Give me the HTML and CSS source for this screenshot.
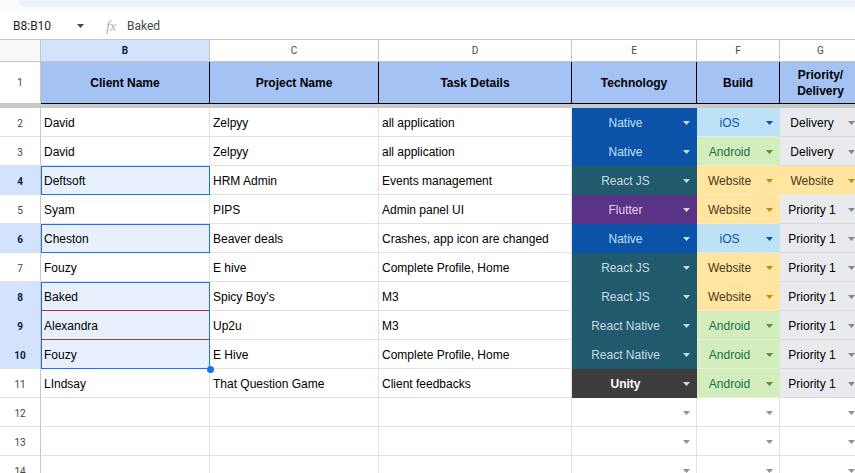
FILE: index.html
```html
<!DOCTYPE html>
<html lang="en">
<head>
<meta charset="utf-8">
<title>Sheet</title>
<link rel="stylesheet" href="styles.css">
</head>
<body>
<div class="topbar"><div class="topbar-pill"></div></div>
<div class="formula">
  <span class="namebox">B8:B10</span>
  <span class="arr name-arr"></span>
  <span class="fx">fx</span>
  <span class="fval">Baked</span>
</div>
<div class="sheet">
  <div class="corner"></div>
  <div class="ch ch-sel">B</div>
  <div class="ch">C</div>
  <div class="ch">D</div>
  <div class="ch">E</div>
  <div class="ch">F</div>
  <div class="ch">G</div>

  <div class="rh rh-head">1</div>
  <div class="hd">Client Name</div>
  <div class="hd">Project Name</div>
  <div class="hd">Task Details</div>
  <div class="hd">Technology</div>
  <div class="hd">Build</div>
  <div class="hd">Priority/<br>Delivery</div>

  <div class="freeze"></div>

  <div class="rh">2</div>
  <div class="c">David</div>
  <div class="c">Zelpyy</div>
  <div class="c">all application</div>
  <div class="c dd native"><span class="t">Native</span><span class="arr"></span></div>
  <div class="c dd ios"><span class="t">iOS</span><span class="arr"></span></div>
  <div class="c dd grey"><span class="t">Delivery</span><span class="arr"></span></div>

  <div class="rh">3</div>
  <div class="c">David</div>
  <div class="c">Zelpyy</div>
  <div class="c">all application</div>
  <div class="c dd native"><span class="t">Native</span><span class="arr"></span></div>
  <div class="c dd android"><span class="t">Android</span><span class="arr"></span></div>
  <div class="c dd grey"><span class="t">Delivery</span><span class="arr"></span></div>

  <div class="rh rh-sel">4</div>
  <div class="c sel">Deftsoft</div>
  <div class="c">HRM Admin</div>
  <div class="c">Events management</div>
  <div class="c dd react"><span class="t">React JS</span><span class="arr"></span></div>
  <div class="c dd web"><span class="t">Website</span><span class="arr"></span></div>
  <div class="c dd web"><span class="t">Website</span><span class="arr"></span></div>

  <div class="rh">5</div>
  <div class="c">Syam</div>
  <div class="c">PIPS</div>
  <div class="c">Admin panel UI</div>
  <div class="c dd flutter"><span class="t">Flutter</span><span class="arr"></span></div>
  <div class="c dd web"><span class="t">Website</span><span class="arr"></span></div>
  <div class="c dd grey"><span class="t">Priority 1</span><span class="arr"></span></div>

  <div class="rh rh-sel">6</div>
  <div class="c sel">Cheston</div>
  <div class="c">Beaver deals</div>
  <div class="c">Crashes, app icon are changed</div>
  <div class="c dd native"><span class="t">Native</span><span class="arr"></span></div>
  <div class="c dd ios"><span class="t">iOS</span><span class="arr"></span></div>
  <div class="c dd grey"><span class="t">Priority 1</span><span class="arr"></span></div>

  <div class="rh">7</div>
  <div class="c">Fouzy</div>
  <div class="c">E hive</div>
  <div class="c">Complete Profile, Home</div>
  <div class="c dd react"><span class="t">React JS</span><span class="arr"></span></div>
  <div class="c dd web"><span class="t">Website</span><span class="arr"></span></div>
  <div class="c dd grey"><span class="t">Priority 1</span><span class="arr"></span></div>

  <div class="rh rh-sel">8</div>
  <div class="c rng rng-top">Baked</div>
  <div class="c">Spicy Boy's</div>
  <div class="c">M3</div>
  <div class="c dd react"><span class="t">React JS</span><span class="arr"></span></div>
  <div class="c dd web"><span class="t">Website</span><span class="arr"></span></div>
  <div class="c dd grey"><span class="t">Priority 1</span><span class="arr"></span></div>

  <div class="rh rh-sel">9</div>
  <div class="c rng">Alexandra</div>
  <div class="c">Up2u</div>
  <div class="c">M3</div>
  <div class="c dd react"><span class="t">React Native</span><span class="arr"></span></div>
  <div class="c dd android"><span class="t">Android</span><span class="arr"></span></div>
  <div class="c dd grey"><span class="t">Priority 1</span><span class="arr"></span></div>

  <div class="rh rh-sel">10</div>
  <div class="c rng rng-bottom">Fouzy<span class="handle"></span></div>
  <div class="c">E Hive</div>
  <div class="c">Complete Profile, Home</div>
  <div class="c dd react"><span class="t">React Native</span><span class="arr"></span></div>
  <div class="c dd android"><span class="t">Android</span><span class="arr"></span></div>
  <div class="c dd grey"><span class="t">Priority 1</span><span class="arr"></span></div>

  <div class="rh">11</div>
  <div class="c">LIndsay</div>
  <div class="c">That Question Game</div>
  <div class="c">Client feedbacks</div>
  <div class="c dd unity"><span class="t">Unity</span><span class="arr"></span></div>
  <div class="c dd android"><span class="t">Android</span><span class="arr"></span></div>
  <div class="c dd grey"><span class="t">Priority 1</span><span class="arr"></span></div>

  <div class="rh">12</div>
  <div class="c"></div>
  <div class="c"></div>
  <div class="c"></div>
  <div class="c dd empty"><span class="t"></span><span class="arr"></span></div>
  <div class="c dd empty"><span class="t"></span><span class="arr"></span></div>
  <div class="c dd empty"><span class="t"></span><span class="arr"></span></div>

  <div class="rh">13</div>
  <div class="c"></div>
  <div class="c"></div>
  <div class="c"></div>
  <div class="c dd empty"><span class="t"></span><span class="arr"></span></div>
  <div class="c dd empty"><span class="t"></span><span class="arr"></span></div>
  <div class="c dd empty"><span class="t"></span><span class="arr"></span></div>

  <div class="rh">14</div>
  <div class="c"></div>
  <div class="c"></div>
  <div class="c"></div>
  <div class="c dd empty"><span class="t"></span><span class="arr"></span></div>
  <div class="c dd empty"><span class="t"></span><span class="arr"></span></div>
  <div class="c dd empty"><span class="t"></span><span class="arr"></span></div>
</div>
</body>
</html>
```
FILE: styles.css
```css
* { box-sizing: border-box; }
html, body { margin: 0; padding: 0; }
body {
  width: 855px;
  height: 473px;
  overflow: hidden;
  background: #ffffff;
  font-family: "Liberation Sans", Arial, sans-serif;
  color: #000;
}

.topbar {
  height: 13px;
  background: #f9fbfd;
  padding-left: 19px;
}
.topbar-pill {
  height: 7px;
  background: #edf2fa;
  border-bottom-left-radius: 8px;
}

.formula {
  height: 26px;
  display: flex;
  align-items: center;
  font-family: Roboto, "Liberation Sans", sans-serif;
  font-size: 12px;
  color: #1f1f1f;
}
.namebox {
  width: 64px;
  margin-left: 13px;
}
.name-arr {
  background: #444746;
  margin-right: 22px;
}
.fx {
  font-family: "Liberation Serif", serif;
  font-style: italic;
  font-size: 15px;
  color: #b4b4b4;
  width: 21px;
  line-height: 1;
  letter-spacing: -0.5px;
}
.fval {
  color: #444746;
}

.arr {
  display: block;
  flex: none;
  width: 7px;
  height: 4px;
  clip-path: polygon(0 0, 100% 0, 50% 100%);
}

.sheet {
  display: grid;
  grid-template-columns: 41px 169px 169px 193px 125px 83px 82px;
  grid-template-rows: 22px 42px 4px repeat(13, 29px);
  border-top: 1px solid #c4c7c5;
  width: 862px;
}

.corner {
  background: #f8f9fa;
  border-right: 1px solid #c4c7c5;
  border-bottom: 1px solid #c4c7c5;
}
.ch {
  display: flex;
  align-items: center;
  justify-content: center;
  font-family: Roboto, "Liberation Sans", sans-serif;
  font-size: 10px;
  color: #444746;
  border-right: 1px solid #c4c7c5;
  border-bottom: 1px solid #c4c7c5;
  background: #fff;
}
.ch-sel {
  background: #d3e3fd;
  color: #041e49;
  font-weight: bold;
}

.rh {
  display: flex;
  align-items: center;
  justify-content: center;
  padding-top: 2px;
  font-family: Roboto, "Liberation Sans", sans-serif;
  font-size: 10px;
  color: #444746;
  background: #fff;
  border-right: 1px solid #c4c7c5;
  border-bottom: 1px solid #e1e1e1;
}
.rh-head { border-bottom-color: #c4c7c5; padding-top: 0; }
.rh-sel {
  background: #d3e3fd;
  color: #041e49;
  font-weight: bold;
}

.hd {
  display: flex;
  align-items: center;
  justify-content: center;
  text-align: center;
  background: #a4c2f4;
  font-weight: bold;
  font-size: 12px;
  line-height: 16px;
  color: #000;
  border-right: 1px solid #000;
  border-bottom: 1px solid #000;
}

.freeze {
  grid-column: 1 / -1;
  background: #c9c9c9;
}

.c {
  display: flex;
  align-items: center;
  padding-left: 3px;
  padding-top: 2px;
  font-size: 12px;
  white-space: nowrap;
  overflow: hidden;
  border-right: 1px solid #e1e1e1;
  border-bottom: 1px solid #e1e1e1;
}

.sel {
  background: #e8f0fe;
  border-right-color: #1a73e8;
  border-bottom-color: #1a73e8;
  box-shadow: inset 1px 1px 0 #1a73e8;
}

.rng {
  background: #e8f0fe;
  border-right-color: #1a73e8;
  border-bottom-color: #a33a3a;
  box-shadow: inset 1px 0 0 #1a73e8;
}
.rng-top {
  box-shadow: inset 1px 1px 0 #1a73e8;
}
.rng-bottom {
  border-bottom-color: #1a73e8;
  position: relative;
  overflow: visible;
}
.handle {
  position: absolute;
  right: -5px;
  bottom: -5px;
  width: 7px;
  height: 7px;
  border-radius: 50%;
  background: #1a73e8;
  z-index: 3;
}

.dd {
  padding-left: 0;
}
.dd .t {
  flex: 1;
  text-align: center;
  margin-right: 4px;
}
.dd .arr {
  margin-right: 6px;
}

.native {
  background: #0a53a8;
  color: #bfe1f6;
  border-color: #0a53a8;
}
.native .arr { background: #bfe1f6; }

.react {
  background: #215a6c;
  color: #c6dbe1;
  border-color: #215a6c;
}
.react .arr { background: #c6dbe1; }

.flutter {
  background: #5a3286;
  color: #e6cff2;
  border-color: #5a3286;
}
.flutter .arr { background: #e6cff2; }

.unity {
  background: #3d3d3d;
  color: #ffffff;
  font-weight: bold;
  border-color: #3d3d3d;
}
.unity .arr { background: #d9d9d9; }

.ios {
  background: #bfe1f6;
  color: #0a53a8;
  border-right-color: #bfe1f6;
  border-bottom-color: #d6ecf9;
}
.ios .arr { background: #0a53a8; }

.android {
  background: #d4edbc;
  color: #11734b;
  border-right-color: #d4edbc;
  border-bottom-color: #e2f3d2;
}
.android .arr { background: #5e8f32; }

.web {
  background: #ffe5a0;
  color: #473821;
  border-right-color: #ffe5a0;
  border-bottom-color: #fbe9bc;
}
.web .arr { background: #b88c1e; }

.grey {
  background: #e8eaed;
  color: #000;
  border-right-color: #e8eaed;
  border-bottom-color: #d7d9dc;
}
.grey .arr { background: #80868b; }

.empty .arr { background: #8d9196; }
```
